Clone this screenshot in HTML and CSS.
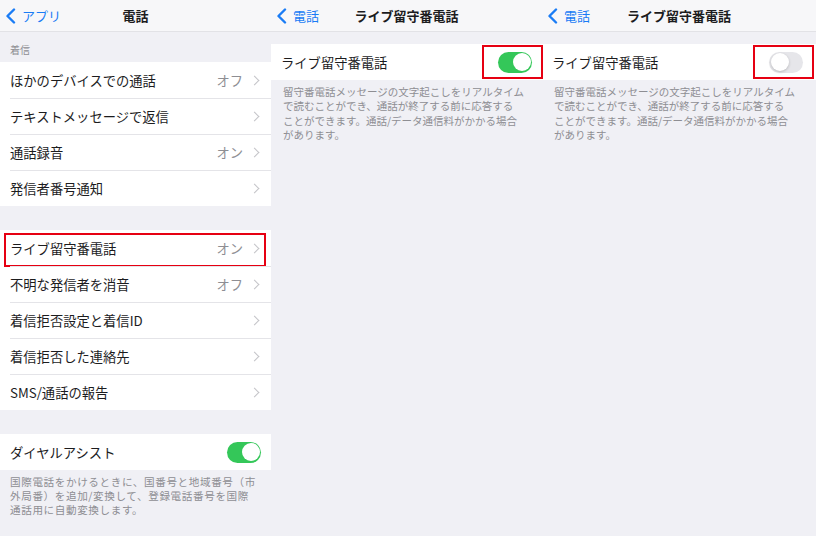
FILE: index.html
```html
<!DOCTYPE html>
<html lang="ja">
<head>
<meta charset="UTF-8">
<meta name="viewport" content="width=device-width, initial-scale=1.0">
<title>電話</title>
<link rel="stylesheet" href="styles.css">
</head>
<body>
<div class="screens">

  <!-- 電話 settings -->
  <div class="panel panel-left">
    <div class="nav">
      <a class="back">
        <svg width="11" height="16" viewBox="0 0 11 16"><polyline points="9,1.5 2.5,8 9,14.5" /></svg>
        アプリ
      </a>
      <span class="nav-title">電話</span>
      <span></span>
    </div>

    <div class="group-header">着信</div>
    <ul class="group">
      <li class="row"><span class="label">ほかのデバイスでの通話</span><span class="value">オフ</span><i class="chev"></i></li>
      <li class="row"><span class="label">テキストメッセージで返信</span><i class="chev"></i></li>
      <li class="row"><span class="label">通話録音</span><span class="value">オン</span><i class="chev"></i></li>
      <li class="row"><span class="label">発信者番号通知</span><i class="chev"></i></li>
    </ul>

    <ul class="group">
      <li class="row row-marked"><span class="label">ライブ留守番電話</span><span class="value">オン</span><i class="chev"></i></li>
      <li class="row"><span class="label">不明な発信者を消音</span><span class="value">オフ</span><i class="chev"></i></li>
      <li class="row"><span class="label">着信拒否設定と着信ID</span><i class="chev"></i></li>
      <li class="row"><span class="label">着信拒否した連絡先</span><i class="chev"></i></li>
      <li class="row"><span class="label">SMS/通話の報告</span><i class="chev"></i></li>
    </ul>

    <ul class="group group-last">
      <li class="row"><span class="label">ダイヤルアシスト</span><span class="toggle on"></span></li>
    </ul>
    <p class="footnote">国際電話をかけるときに、国番号と地域番号（市<br>外局番）を追加/変換して、登録電話番号を国際<br>通話用に自動変換します。</p>
  </div>

  <!-- ライブ留守番電話: on -->
  <div class="panel panel-mid">
    <div class="nav">
      <a class="back">
        <svg width="11" height="16" viewBox="0 0 11 16"><polyline points="9,1.5 2.5,8 9,14.5" /></svg>
        電話
      </a>
      <span class="nav-title">ライブ留守番電話</span>
      <span></span>
    </div>
    <ul class="group group-top">
      <li class="row"><span class="label">ライブ留守番電話</span><span class="mark"><span class="toggle on"></span></span></li>
    </ul>
    <p class="footnote footnote-small">留守番電話メッセージの文字起こしをリアルタイム<br>で読むことができ、通話が終了する前に応答する<br>ことができます。通話/データ通信料がかかる場合<br>があります。</p>
  </div>

  <!-- ライブ留守番電話: off -->
  <div class="panel panel-right">
    <div class="nav">
      <a class="back">
        <svg width="11" height="16" viewBox="0 0 11 16"><polyline points="9,1.5 2.5,8 9,14.5" /></svg>
        電話
      </a>
      <span class="nav-title">ライブ留守番電話</span>
      <span></span>
    </div>
    <ul class="group group-top">
      <li class="row"><span class="label">ライブ留守番電話</span><span class="mark"><span class="toggle"></span></span></li>
    </ul>
    <p class="footnote footnote-small">留守番電話メッセージの文字起こしをリアルタイム<br>で読むことができ、通話が終了する前に応答する<br>ことができます。通話/データ通信料がかかる場合<br>があります。</p>
  </div>

</div>
</body>
</html>
```

FILE: styles.css
```css
body {
  margin: 0;
  font-family: "Noto Sans CJK JP", "Noto Sans", sans-serif;
  color: #1c1c1e;
  background-color: #f0f0f5;
}

.screens {
  display: flex;
  width: 816px;
  height: 536px;
  overflow: hidden;
}

.panel {
  background-color: #f0f0f5; /* grouped background */
  height: 536px;
}

.panel-left { width: 271px; }
.panel-mid { width: 271px; }
.panel-right { width: 274px; }

/* Navigation bar */
.nav {
  height: 32px;
  box-sizing: border-box;
  display: grid;
  grid-template-columns: 1fr auto 1fr;
  align-items: center;
  background-color: #f7f7f9;
  border-bottom: 1px solid #e2e2e6;
}

.back {
  display: flex;
  align-items: center;
  gap: 6px;
  padding-left: 5px;
  color: #1a7cf5;
  font-size: 13px;
}

.back svg polyline {
  fill: none;
  stroke: #1a7cf5;
  stroke-width: 2.4;
  stroke-linecap: round;
  stroke-linejoin: round;
}

.nav-title {
  font-size: 13px;
  font-weight: 700;
}

/* Grouped list */
.group-header {
  height: 30px;
  box-sizing: border-box;
  padding: 10px 10px 0;
  font-size: 10px;
  color: #8e8e93;
}

.group {
  list-style: none;
  margin: 0 0 24px;
  padding: 0;
  background-color: #fff;
}

.group-last {
  margin-bottom: 0;
}

.group-top {
  margin-top: 12px;
  margin-bottom: 0;
}

.row {
  position: relative;
  height: 36px;
  display: flex;
  align-items: center;
  padding: 0 10px;
  font-size: 13.3px;
}

.row + .row::before {
  content: "";
  position: absolute;
  top: 0;
  left: 10px;
  right: 0;
  border-top: 1px solid #e4e4e8;
}

.label {
  flex: 1;
}

.value {
  color: #8e8e93;
  margin-right: 8px;
}

.chev {
  width: 6px;
  height: 6px;
  margin-right: 3px;
  border-top: 1.3px solid #c4c4c8;
  border-right: 1.3px solid #c4c4c8;
  transform: rotate(45deg);
}

/* Switch */
.toggle {
  position: relative;
  display: block;
  width: 34px;
  height: 21px;
  border-radius: 11px;
  background-color: #e6e6ea;
}

.toggle::after {
  content: "";
  position: absolute;
  top: 1.5px;
  left: 1.5px;
  width: 18px;
  height: 18px;
  border-radius: 50%;
  background-color: #fff;
  box-shadow: 0 1px 3px rgba(0, 0, 0, 0.2);
}

.toggle.on {
  background-color: #34c759;
}

.toggle.on::after {
  left: auto;
  right: 1.5px;
  box-shadow: none;
}

.panel-right .row {
  padding-right: 13px;
}

/* Red highlight boxes */
.row-marked::after {
  content: "";
  position: absolute;
  top: 3px;
  left: 4px;
  right: 5px;
  bottom: -1px;
  border: 2px solid #e60012;
}

.mark {
  position: relative;
}

.mark::after {
  content: "";
  position: absolute;
  top: -7px;
  right: -11px;
  bottom: -6px;
  left: -16px;
  border: 2px solid #e60012;
}

.footnote {
  margin: 5px 0 0;
  padding: 0 10px;
  font-size: 10.6px;
  letter-spacing: 0.6px;
  line-height: 14.2px;
  color: #8e8e93;
  white-space: nowrap;
}

.footnote-small {
  padding: 0 12px;
  font-size: 10.5px;
  letter-spacing: 0;
  line-height: 14.3px;
}
```
